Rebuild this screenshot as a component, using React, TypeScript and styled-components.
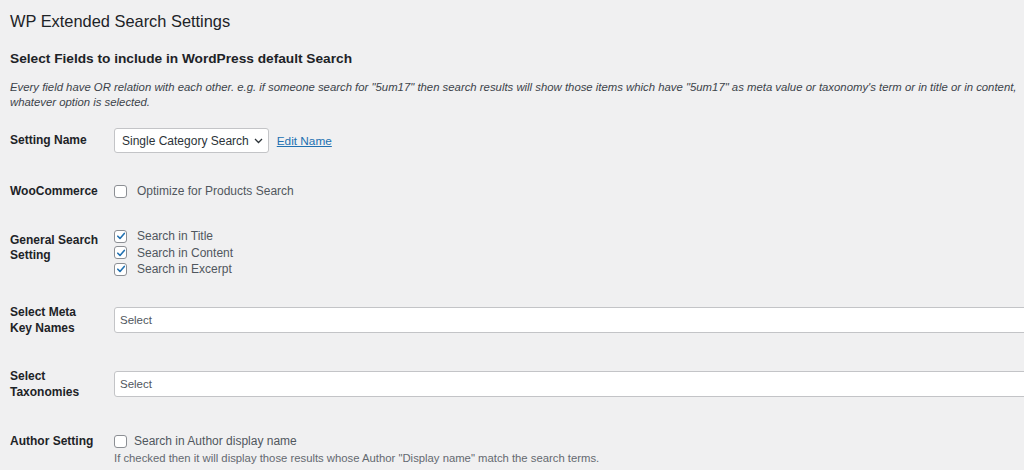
import React from 'react';
import styled, { createGlobalStyle } from 'styled-components';

const GlobalStyle = createGlobalStyle`
  html, body {
    margin: 0;
    padding: 0;
    background: #f0f0f1;
  }
  body {
    font-family: 'Liberation Sans', Arial, sans-serif;
    color: #1d2327;
    overflow: hidden;
  }
`;

const Wrap = styled.div`
  width: 1024px;
  height: 470px;
  overflow: hidden;
  padding: 9px 0 0 10px;
  box-sizing: border-box;
`;

const Title = styled.h1`
  margin: 0;
  font-size: 16.4px;
  font-weight: 400;
  line-height: 24px;
  color: #1d2327;
`;

const SubTitle = styled.h2`
  margin: 17px 0 0;
  font-size: 13.7px;
  font-weight: 700;
  line-height: 18px;
`;

const Intro = styled.p`
  margin: 12px 0 0;
  font-size: 11.35px;
  font-style: italic;
  line-height: 15px;
  color: #3c434a;
  white-space: nowrap;
`;

const Row = styled.div<{ $top: number }>`
  display: grid;
  grid-template-columns: 104px 1fr;
  align-items: start;
  margin-top: ${(p) => p.$top}px;
`;

const Label = styled.div<{ $lh?: number; $pt?: number }>`
  font-size: 12px;
  font-weight: 700;
  line-height: ${(p) => p.$lh ?? 18}px;
  padding-top: ${(p) => p.$pt ?? 0}px;
`;

const Field = styled.div<{ $pt?: number }>`
  padding-top: ${(p) => p.$pt ?? 0}px;
  display: flex;
  flex-direction: column;
`;

const Inline = styled.div`
  display: flex;
  align-items: center;
`;

const SelectBox = styled.div`
  display: flex;
  align-items: center;
  gap: 5px;
  height: 25px;
  box-sizing: border-box;
  padding: 0 5px 0 7px;
  background: #fff;
  border: 1px solid #c3c4c7;
  border-radius: 3px;
  font-size: 12px;
  color: #2c3338;
`;

const EditLink = styled.a`
  margin-left: 8px;
  font-size: 11.8px;
  color: #2271b1;
  text-decoration: underline;
  cursor: pointer;
`;

const Check = styled.label<{ $gap?: number; $lh?: number }>`
  display: flex;
  align-items: center;
  gap: ${(p) => p.$gap ?? 10}px;
  height: ${(p) => p.$lh ?? 18}px;
  font-size: 12px;
  color: #50575e;
`;

const Box = styled.span`
  width: 13px;
  height: 13px;
  box-sizing: border-box;
  border: 1px solid #8c8f94;
  border-radius: 3px;
  background: #fff;
  display: flex;
  align-items: center;
  justify-content: center;
  flex: none;
`;

const TextInput = styled.div`
  width: 1000px;
  height: 26px;
  box-sizing: border-box;
  display: flex;
  align-items: center;
  padding-left: 5px;
  background: #fff;
  border: 1px solid #c3c4c7;
  border-radius: 3px;
  font-size: 11.5px;
  color: #50575e;
`;

const Hint = styled.div`
  font-size: 11.3px;
  line-height: 16px;
  color: #646970;
`;

function CheckItem({ label, checked, gap, lh }: { label: string; checked?: boolean; gap?: number; lh?: number }) {
  return (
    <Check $gap={gap} $lh={lh}>
      <Box>
        {checked && (
          <svg width="10" height="10" viewBox="0 0 10 10">
            <path d="M1.8 5.2 L4 7.4 L8.3 2.4" fill="none" stroke="#2271b1" strokeWidth="1.6" strokeLinecap="round" strokeLinejoin="round" />
          </svg>
        )}
      </Box>
      {label}
    </Check>
  );
}

export default function App() {
  return (
    <>
      <GlobalStyle />
      <Wrap>
        <Title>WP Extended Search Settings</Title>
        <SubTitle>Select Fields to include in WordPress default Search</SubTitle>
        <Intro>
          Every field have OR relation with each other. e.g. if someone search for "5um17" then search results will show those items which have "5um17" as meta value or taxonomy's term or in title or in content,
          <br />
          whatever option is selected.
        </Intro>

        <Row $top={18}>
          <Label $lh={25}>Setting Name</Label>
          <Inline>
            <SelectBox>
              Single Category Search
              <svg width="9" height="6" viewBox="0 0 9 6">
                <path d="M1 1 L4.5 4.5 L8 1" fill="none" stroke="#2c3338" strokeWidth="1.3" />
              </svg>
            </SelectBox>
            <EditLink>Edit Name</EditLink>
          </Inline>
        </Row>

        <Row $top={29}>
          <Label>WooCommerce</Label>
          <Field>
            <CheckItem label="Optimize for Products Search" />
          </Field>
        </Row>

        <Row $top={28}>
          <Label $lh={15} $pt={4.5}>
            General Search
            <br />
            Setting
          </Label>
          <Field>
            <CheckItem label="Search in Title" checked lh={16.5} />
            <CheckItem label="Search in Content" checked lh={16.5} />
            <CheckItem label="Search in Excerpt" checked lh={16.5} />
          </Field>
        </Row>

        <Row $top={26.5}>
          <Label $lh={16}>
            Select Meta
            <br />
            Key Names
          </Label>
          <Field $pt={3}>
            <TextInput>Select</TextInput>
          </Field>
        </Row>

        <Row $top={32}>
          <Label $lh={16}>
            Select
            <br />
            Taxonomies
          </Label>
          <Field $pt={3}>
            <TextInput>Select</TextInput>
          </Field>
        </Row>

        <Row $top={32}>
          <Label>Author Setting</Label>
          <Field>
            <CheckItem label="Search in Author display name" gap={7} />
            <Hint>If checked then it will display those results whose Author "Display name" match the search terms.</Hint>
          </Field>
        </Row>
      </Wrap>
    </>
  );
}
